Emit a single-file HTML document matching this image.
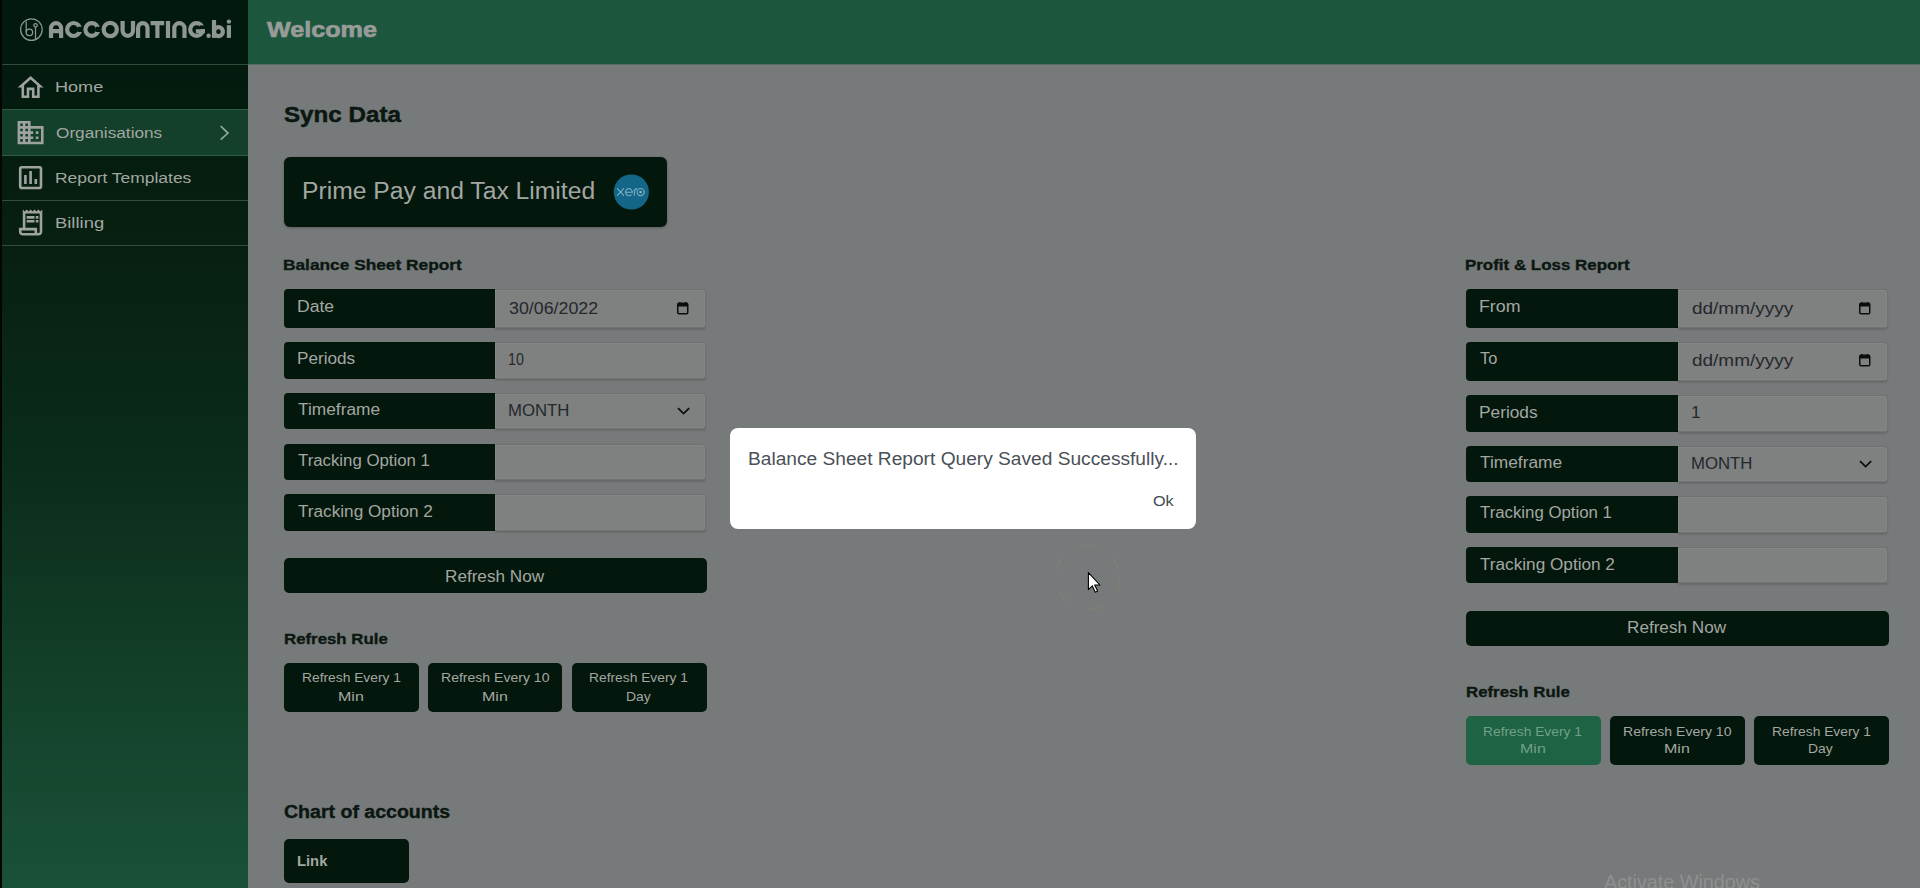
<!DOCTYPE html>
<html><head><meta charset="utf-8">
<style>
*{box-sizing:border-box;margin:0;padding:0}
html,body{width:1920px;height:888px;overflow:hidden}
body{position:relative;background:#777a7a;font-family:"Liberation Sans",sans-serif;}
.a{position:absolute}
.t{position:absolute;white-space:nowrap}
</style></head><body>
<div class="a" style="left:0px;top:0px;width:248px;height:888px;background:linear-gradient(#021a0e 0px,#041d0f 150px,#072012 250px,#0b2c1b 465px,#134029 680px,#1a5139 888px)"></div>
<div class="a" style="left:0px;top:0px;width:2px;height:888px;background:#030504"></div>
<div class="a" style="left:2px;top:0px;width:246px;height:64px;background:#021a0e"></div>
<div class="a" style="left:248px;top:0px;width:1672px;height:64px;background:#1b563d"></div>
<div class="a" style="left:248px;top:64px;width:1672px;height:1px;background:#546f62"></div>
<div class="a" style="left:2px;top:109px;width:246px;height:46px;background:#143f2b"></div>
<div class="a" style="left:2px;top:64px;width:246px;height:1px;background:#2f4f3d"></div>
<div class="a" style="left:2px;top:200px;width:246px;height:1px;background:#2f4f3d"></div>
<div class="a" style="left:2px;top:245px;width:246px;height:1px;background:#2f4f3d"></div>
<div class="a" style="left:2px;top:109px;width:246px;height:1px;background:#2b5c44"></div>
<div class="a" style="left:2px;top:155px;width:246px;height:1px;background:#2b5c44"></div>
<svg class="a" style="left:18px;top:16px" width="28" height="28" viewBox="0 0 28 28" fill="none" stroke="#8e9792" stroke-width="1.25">
<circle cx="13.4" cy="13.55" r="10.8"/>
<path d="M8.2 5.6 V16.3"/><circle cx="11.4" cy="16.3" r="3.25"/>
<circle cx="17.5" cy="9.3" r="1.75"/><path d="M17.5 11.05 V23.6"/>
</svg>
<svg class="a" style="left:0;top:0" width="248" height="64" viewBox="0 0 248 64"><g fill="none" stroke="#8e9792" stroke-width="4.2"><path d="M51 37.9 V28.25 A5.05 5.05 0 0 1 61.1 28.25 V37.9 M51 31.2 H61.1"/><circle cx="73.6" cy="29.5" r="6.5"/><circle cx="91.75" cy="29.5" r="6.35"/><circle cx="110.25" cy="29.5" r="6.6"/><path d="M122.6 21.1 V30.6 A5.2 5.2 0 0 0 133 30.6 V21.1"/><path d="M138.1 37.9 V27.9 A4.7 4.7 0 0 1 147.5 27.9 V37.9"/><path d="M150.6 23.2 H164.2 M157.4 21.1 V37.9 M168 21.1 V37.9"/><path d="M174.3 37.9 V28.3 A5.1 5.1 0 0 1 184.5 28.3 V37.9"/><circle cx="196.55" cy="29.5" r="6.35"/><path d="M214 20 V37.9"/><circle cx="218.45" cy="31.65" r="4.45"/><path d="M228.9 25.2 V37.9"/></g><g fill="#021a0e"><rect x="77.6" y="26.8" width="4.9" height="5.2"/><rect x="95.8" y="26.8" width="4.7" height="5.2"/><rect x="199.5" y="25.4" width="7" height="3.8"/></g><g fill="#8e9792"><rect x="195.9" y="29.2" width="9" height="4"/><circle cx="208.6" cy="35.8" r="2.2"/><circle cx="228.9" cy="21.6" r="2.2"/></g></svg>
<div class="t" style="left:267.30px;top:15.70px;font-size:22.5px;line-height:27px;font-weight:bold;color:#989b98;transform:scaleX(1.1179);transform-origin:0 0;-webkit-text-stroke:0.7px #989b98;">Welcome</div>
<div class="t" style="left:54.73px;top:76.73px;font-size:15.5px;line-height:19px;font-weight:normal;color:#a3a7a1;transform:scaleX(1.1655);transform-origin:0 0;">Home</div>
<div class="t" style="left:55.90px;top:123.43px;font-size:15.5px;line-height:19px;font-weight:normal;color:#a3a7a1;transform:scaleX(1.1107);transform-origin:0 0;">Organisations</div>
<div class="t" style="left:54.78px;top:167.73px;font-size:15.5px;line-height:19px;font-weight:normal;color:#a3a7a1;transform:scaleX(1.1249);transform-origin:0 0;">Report Templates</div>
<div class="t" style="left:54.71px;top:212.93px;font-size:15.5px;line-height:19px;font-weight:normal;color:#a3a7a1;transform:scaleX(1.1879);transform-origin:0 0;">Billing</div>
<svg class="a" style="left:15.4px;top:72.1px" width="31.2" height="31.2" viewBox="0 0 24 24"><path fill="#9ea39f" d="M12 5.69l5 4.5V18h-2v-6H9v6H7v-7.81l5-4.5M12 3L2 12h3v8h6v-6h2v6h6v-8h3L12 3z"/></svg>
<svg class="a" style="left:14.9px;top:117px" width="31.2" height="31.2" viewBox="0 0 24 24"><path fill="#9ea39f" d="M12 7V3H2v18h20V7H12zM6 19H4v-2h2v2zm0-4H4v-2h2v2zm0-4H4V9h2v2zm0-4H4V5h2v2zm4 12H8v-2h2v2zm0-4H8v-2h2v2zm0-4H8V9h2v2zm0-4H8V5h2v2zm10 12h-8v-2h2v-2h-2v-2h2v-2h-2V9h8v10zm-2-8h-2v2h2v-2zm0 4h-2v2h2v-2z"/></svg>
<svg class="a" style="left:15.0px;top:162.0px" width="31.2" height="31.2" viewBox="0 0 24 24"><path fill="#9ea39f" d="M9 17H7v-7h2v7zm4 0h-2V7h2v10zm4 0h-2v-4h2v4zm2 2H5V5h14v14zm0-16H5c-1.1 0-2 .9-2 2v14c0 1.1.9 2 2 2h14c1.1 0 2-.9 2-2V5c0-1.1-.9-2-2-2z"/></svg>
<svg class="a" style="left:15.0px;top:206.9px" width="31.2" height="31.2" viewBox="0 0 24 24"><path fill="#9ea39f" d="M19.5 3.5L18 2l-1.5 1.5L15 2l-1.5 1.5L12 2l-1.5 1.5L9 2 7.5 3.5 6 2v14H3v3c0 1.66 1.34 3 3 3h12c1.66 0 3-1.34 3-3V2l-1.5 1.5zM15 20H6c-.55 0-1-.45-1-1v-1h10v2zm4-1c0 .55-.45 1-1 1s-1-.45-1-1v-3H8V5h11v14zM9 7h6v2H9zM16 7h2v2h-2zM9 10h6v2H9zM16 10h2v2h-2z"/></svg>
<svg class="a" style="left:216px;top:122px" width="16" height="22" viewBox="0 0 16 22"><path d="M4.7 4.2 L12 11.1 L4.7 17.6" fill="none" stroke="#8fb09c" stroke-width="1.6"/></svg>
<div class="t" style="left:284.20px;top:100.60px;font-size:22.5px;line-height:27px;font-weight:bold;color:#0b1711;transform:scaleX(1.0743);transform-origin:0 0;-webkit-text-stroke:0.5px #0b1711;">Sync Data</div>
<div class="a" style="left:284px;top:157px;width:383px;height:70px;background:#03170d;border-radius:6px;box-shadow:0 1px 3px rgba(0,0,0,.25)"></div>
<div class="t" style="left:301.83px;top:177.23px;font-size:23px;line-height:28px;font-weight:normal;color:#a3a7a1;transform:scaleX(1.0733);transform-origin:0 0;">Prime Pay and Tax Limited</div>
<svg class="a" style="left:613px;top:174px" width="36" height="36" viewBox="0 0 36 36"><circle cx="18.3" cy="18" r="17.6" fill="#146689"/><g fill="none" stroke="#7fb0c2" stroke-width="1.1"><path d="M4.2 14.3 L10.8 21.7 M10.8 14.3 L4.2 21.7"/><path d="M12.6 18.2 H19.3 A3.4 3.6 0 1 0 18.4 20.6"/><path d="M21.3 21.8 V17.6 A3.2 3.2 0 0 1 24 14.6"/><circle cx="27.6" cy="18.1" r="3.6"/><circle cx="27.6" cy="18.1" r="0.9" fill="#7fb0c2"/></g></svg>
<div class="t" style="left:283.45px;top:255.80px;font-size:15px;line-height:18px;font-weight:bold;color:#0b1711;transform:scaleX(1.1529);transform-origin:0 0;-webkit-text-stroke:0.35px #0b1711;">Balance Sheet Report</div>
<div class="a" style="left:284px;top:289px;width:211px;height:39px;background:#03170d;border-radius:4px 0 0 4px"></div>
<div class="a" style="left:495px;top:289px;width:211px;height:39px;background:#7f8080;border:1px solid #707172;border-left:0;border-radius:0 3px 3px 0;box-shadow:inset 1px 1px 0 #868687,inset -1px -1px 0 #858586,0 1.5px 1.5px rgba(0,0,0,.12)"></div>
<div class="t" style="left:296.70px;top:296.65px;font-size:16px;line-height:19px;font-weight:normal;color:#a3a7a1;transform:scaleX(1.0973);transform-origin:0 0;">Date</div>
<div class="t" style="left:509.30px;top:298.55px;font-size:16px;line-height:19px;font-weight:normal;color:#23282c;transform:scaleX(1.1125);transform-origin:0 0;">30/06/2022</div>
<svg class="a" style="left:676.5px;top:300.5px" width="14" height="16" viewBox="0 0 14 16"><path d="M2.8 1 V3 M8.8 1 V3" stroke="#0c0d0e" stroke-width="1.4"/><rect x="0.75" y="2.3" width="10" height="10.5" rx="1.3" fill="none" stroke="#0c0d0e" stroke-width="1.5"/><rect x="0.75" y="2.3" width="10" height="3.2" fill="#0c0d0e"/></svg>
<div class="a" style="left:284px;top:341.5px;width:211px;height:37.5px;background:#03170d;border-radius:4px 0 0 4px"></div>
<div class="a" style="left:495px;top:341.5px;width:211px;height:37.5px;background:#7f8080;border:1px solid #707172;border-left:0;border-radius:0 3px 3px 0;box-shadow:inset 1px 1px 0 #868687,inset -1px -1px 0 #858586,0 1.5px 1.5px rgba(0,0,0,.12)"></div>
<div class="t" style="left:296.73px;top:349.15px;font-size:16px;line-height:19px;font-weight:normal;color:#a3a7a1;transform:scaleX(1.0723);transform-origin:0 0;">Periods</div>
<div class="t" style="left:508.41px;top:349.95px;font-size:16px;line-height:19px;font-weight:normal;color:#23282c;transform:scaleX(0.8877);transform-origin:0 0;">10</div>
<div class="a" style="left:284px;top:392.5px;width:211px;height:36.5px;background:#03170d;border-radius:4px 0 0 4px"></div>
<div class="a" style="left:495px;top:392.5px;width:211px;height:36.5px;background:#7f8080;border:1px solid #707172;border-left:0;border-radius:0 3px 3px 0;box-shadow:inset 1px 1px 0 #868687,inset -1px -1px 0 #858586,0 1.5px 1.5px rgba(0,0,0,.12)"></div>
<div class="t" style="left:297.80px;top:400.15px;font-size:16px;line-height:19px;font-weight:normal;color:#a3a7a1;transform:scaleX(1.0821);transform-origin:0 0;">Timeframe</div>
<div class="t" style="left:508.25px;top:400.95px;font-size:16px;line-height:19px;font-weight:normal;color:#23282c;transform:scaleX(1.0473);transform-origin:0 0;">MONTH</div>
<svg class="a" style="left:676px;top:405.5px" width="14" height="10" viewBox="0 0 14 10"><path d="M2 2.2 L7.6 7.6 L13.2 2.2" fill="none" stroke="#0c0d0e" stroke-width="1.8"/></svg>
<div class="a" style="left:284px;top:443.5px;width:211px;height:36.5px;background:#03170d;border-radius:4px 0 0 4px"></div>
<div class="a" style="left:495px;top:443.5px;width:211px;height:36.5px;background:#7f8080;border:1px solid #707172;border-left:0;border-radius:0 3px 3px 0;box-shadow:inset 1px 1px 0 #868687,inset -1px -1px 0 #858586,0 1.5px 1.5px rgba(0,0,0,.12)"></div>
<div class="t" style="left:297.80px;top:451.15px;font-size:16px;line-height:19px;font-weight:normal;color:#a3a7a1;transform:scaleX(1.0494);transform-origin:0 0;">Tracking Option 1</div>
<div class="a" style="left:284px;top:494px;width:211px;height:36.5px;background:#03170d;border-radius:4px 0 0 4px"></div>
<div class="a" style="left:495px;top:494px;width:211px;height:36.5px;background:#7f8080;border:1px solid #707172;border-left:0;border-radius:0 3px 3px 0;box-shadow:inset 1px 1px 0 #868687,inset -1px -1px 0 #858586,0 1.5px 1.5px rgba(0,0,0,.12)"></div>
<div class="t" style="left:297.80px;top:501.65px;font-size:16px;line-height:19px;font-weight:normal;color:#a3a7a1;transform:scaleX(1.0732);transform-origin:0 0;">Tracking Option 2</div>
<div class="a" style="left:284px;top:557.5px;width:422.5px;height:35.0px;background:#03170d;border-radius:5px"></div>
<div class="t" style="left:445.31px;top:565.68px;font-size:16.5px;line-height:20px;font-weight:normal;color:#a3a7a1;transform:scaleX(1.0386);transform-origin:0 0;">Refresh Now</div>
<div class="t" style="left:283.51px;top:628.83px;font-size:15.5px;line-height:19px;font-weight:bold;color:#0b1711;transform:scaleX(1.0854);transform-origin:0 0;-webkit-text-stroke:0.35px #0b1711;">Refresh Rule</div>
<div class="a" style="left:284px;top:663px;width:135px;height:49px;background:#03170d;border-radius:5px"></div>
<div class="a" style="left:428px;top:663px;width:134px;height:49px;background:#03170d;border-radius:5px"></div>
<div class="a" style="left:571.5px;top:663px;width:135.0px;height:49px;background:#03170d;border-radius:5px"></div>
<div class="t" style="left:301.88px;top:670.12px;font-size:13.5px;line-height:16px;font-weight:normal;color:#a3a7a1;transform:scaleX(1.0223);transform-origin:0 0;">Refresh Every 1</div>
<div class="t" style="left:338.41px;top:688.82px;font-size:13.5px;line-height:16px;font-weight:normal;color:#a3a7a1;transform:scaleX(1.1855);transform-origin:0 0;">Min</div>
<div class="t" style="left:440.51px;top:670.12px;font-size:13.5px;line-height:16px;font-weight:normal;color:#a3a7a1;transform:scaleX(1.0400);transform-origin:0 0;">Refresh Every 10</div>
<div class="t" style="left:481.81px;top:688.82px;font-size:13.5px;line-height:16px;font-weight:normal;color:#a3a7a1;transform:scaleX(1.1855);transform-origin:0 0;">Min</div>
<div class="t" style="left:589.28px;top:670.12px;font-size:13.5px;line-height:16px;font-weight:normal;color:#a3a7a1;transform:scaleX(1.0223);transform-origin:0 0;">Refresh Every 1</div>
<div class="t" style="left:625.99px;top:688.82px;font-size:13.5px;line-height:16px;font-weight:normal;color:#a3a7a1;transform:scaleX(1.0300);transform-origin:0 0;">Day</div>
<div class="t" style="left:284.40px;top:801.46px;font-size:18px;line-height:22px;font-weight:bold;color:#0b1711;transform:scaleX(1.0856);transform-origin:0 0;-webkit-text-stroke:0.4px #0b1711;">Chart of accounts</div>
<div class="a" style="left:284px;top:839px;width:125px;height:43.5px;background:#03170d;border-radius:5px"></div>
<div class="t" style="left:296.72px;top:851.80px;font-size:15px;line-height:18px;font-weight:bold;color:#a3a7a1;transform:scaleX(0.9838);transform-origin:0 0;">Link</div>
<div class="t" style="left:1465.47px;top:256.00px;font-size:15px;line-height:18px;font-weight:bold;color:#0b1711;transform:scaleX(1.1281);transform-origin:0 0;-webkit-text-stroke:0.35px #0b1711;">Profit &amp; Loss Report</div>
<div class="a" style="left:1466px;top:289.4px;width:212px;height:38.30000000000001px;background:#03170d;border-radius:4px 0 0 4px"></div>
<div class="a" style="left:1678px;top:289.4px;width:210px;height:38.30000000000001px;background:#7f8080;border:1px solid #707172;border-left:0;border-radius:0 3px 3px 0;box-shadow:inset 1px 1px 0 #868687,inset -1px -1px 0 #858586,0 1.5px 1.5px rgba(0,0,0,.12)"></div>
<div class="t" style="left:1478.69px;top:297.05px;font-size:16px;line-height:19px;font-weight:normal;color:#a3a7a1;transform:scaleX(1.1111);transform-origin:0 0;">From</div>
<div class="t" style="left:1692.30px;top:298.95px;font-size:16px;line-height:19px;font-weight:normal;color:#23282c;transform:scaleX(1.1858);transform-origin:0 0;">dd/mm/yyyy</div>
<svg class="a" style="left:1858.5px;top:300.9px" width="14" height="16" viewBox="0 0 14 16"><path d="M2.8 1 V3 M8.8 1 V3" stroke="#0c0d0e" stroke-width="1.4"/><rect x="0.75" y="2.3" width="10" height="10.5" rx="1.3" fill="none" stroke="#0c0d0e" stroke-width="1.5"/><rect x="0.75" y="2.3" width="10" height="3.2" fill="#0c0d0e"/></svg>
<div class="a" style="left:1466px;top:341.5px;width:212px;height:39.5px;background:#03170d;border-radius:4px 0 0 4px"></div>
<div class="a" style="left:1678px;top:341.5px;width:210px;height:39.5px;background:#7f8080;border:1px solid #707172;border-left:0;border-radius:0 3px 3px 0;box-shadow:inset 1px 1px 0 #868687,inset -1px -1px 0 #858586,0 1.5px 1.5px rgba(0,0,0,.12)"></div>
<div class="t" style="left:1479.80px;top:349.15px;font-size:16px;line-height:19px;font-weight:normal;color:#a3a7a1;transform:scaleX(1.0235);transform-origin:0 0;">To</div>
<div class="t" style="left:1692.30px;top:351.05px;font-size:16px;line-height:19px;font-weight:normal;color:#23282c;transform:scaleX(1.1858);transform-origin:0 0;">dd/mm/yyyy</div>
<svg class="a" style="left:1858.5px;top:353.0px" width="14" height="16" viewBox="0 0 14 16"><path d="M2.8 1 V3 M8.8 1 V3" stroke="#0c0d0e" stroke-width="1.4"/><rect x="0.75" y="2.3" width="10" height="10.5" rx="1.3" fill="none" stroke="#0c0d0e" stroke-width="1.5"/><rect x="0.75" y="2.3" width="10" height="3.2" fill="#0c0d0e"/></svg>
<div class="a" style="left:1466px;top:395px;width:212px;height:37px;background:#03170d;border-radius:4px 0 0 4px"></div>
<div class="a" style="left:1678px;top:395px;width:210px;height:37px;background:#7f8080;border:1px solid #707172;border-left:0;border-radius:0 3px 3px 0;box-shadow:inset 1px 1px 0 #868687,inset -1px -1px 0 #858586,0 1.5px 1.5px rgba(0,0,0,.12)"></div>
<div class="t" style="left:1478.72px;top:402.65px;font-size:16px;line-height:19px;font-weight:normal;color:#a3a7a1;transform:scaleX(1.0798);transform-origin:0 0;">Periods</div>
<div class="t" style="left:1691.22px;top:403.45px;font-size:16px;line-height:19px;font-weight:normal;color:#23282c;transform:scaleX(1.0800);transform-origin:0 0;">1</div>
<div class="a" style="left:1466px;top:445.6px;width:212px;height:36.39999999999998px;background:#03170d;border-radius:4px 0 0 4px"></div>
<div class="a" style="left:1678px;top:445.6px;width:210px;height:36.39999999999998px;background:#7f8080;border:1px solid #707172;border-left:0;border-radius:0 3px 3px 0;box-shadow:inset 1px 1px 0 #868687,inset -1px -1px 0 #858586,0 1.5px 1.5px rgba(0,0,0,.12)"></div>
<div class="t" style="left:1479.80px;top:453.25px;font-size:16px;line-height:19px;font-weight:normal;color:#a3a7a1;transform:scaleX(1.0821);transform-origin:0 0;">Timeframe</div>
<div class="t" style="left:1691.25px;top:454.05px;font-size:16px;line-height:19px;font-weight:normal;color:#23282c;transform:scaleX(1.0473);transform-origin:0 0;">MONTH</div>
<svg class="a" style="left:1858px;top:458.6px" width="14" height="10" viewBox="0 0 14 10"><path d="M2 2.2 L7.6 7.6 L13.2 2.2" fill="none" stroke="#0c0d0e" stroke-width="1.8"/></svg>
<div class="a" style="left:1466px;top:495.7px;width:212px;height:37.30000000000001px;background:#03170d;border-radius:4px 0 0 4px"></div>
<div class="a" style="left:1678px;top:495.7px;width:210px;height:37.30000000000001px;background:#7f8080;border:1px solid #707172;border-left:0;border-radius:0 3px 3px 0;box-shadow:inset 1px 1px 0 #868687,inset -1px -1px 0 #858586,0 1.5px 1.5px rgba(0,0,0,.12)"></div>
<div class="t" style="left:1479.80px;top:503.35px;font-size:16px;line-height:19px;font-weight:normal;color:#a3a7a1;transform:scaleX(1.0494);transform-origin:0 0;">Tracking Option 1</div>
<div class="a" style="left:1466px;top:547.2px;width:212px;height:36.299999999999955px;background:#03170d;border-radius:4px 0 0 4px"></div>
<div class="a" style="left:1678px;top:547.2px;width:210px;height:36.299999999999955px;background:#7f8080;border:1px solid #707172;border-left:0;border-radius:0 3px 3px 0;box-shadow:inset 1px 1px 0 #868687,inset -1px -1px 0 #858586,0 1.5px 1.5px rgba(0,0,0,.12)"></div>
<div class="t" style="left:1479.80px;top:554.85px;font-size:16px;line-height:19px;font-weight:normal;color:#a3a7a1;transform:scaleX(1.0732);transform-origin:0 0;">Tracking Option 2</div>
<div class="a" style="left:1466px;top:611px;width:423px;height:34.5px;background:#03170d;border-radius:5px"></div>
<div class="t" style="left:1627.21px;top:617.48px;font-size:16.5px;line-height:20px;font-weight:normal;color:#a3a7a1;transform:scaleX(1.0386);transform-origin:0 0;">Refresh Now</div>
<div class="t" style="left:1465.61px;top:682.13px;font-size:15.5px;line-height:19px;font-weight:bold;color:#0b1711;transform:scaleX(1.0854);transform-origin:0 0;-webkit-text-stroke:0.35px #0b1711;">Refresh Rule</div>
<div class="a" style="left:1466px;top:716px;width:134.5px;height:48.5px;background:#1d6344;border-radius:5px"></div>
<div class="a" style="left:1610px;top:716px;width:135px;height:48.5px;background:#03170d;border-radius:5px"></div>
<div class="a" style="left:1754px;top:716px;width:135px;height:48.5px;background:#03170d;border-radius:5px"></div>
<div class="t" style="left:1483.48px;top:723.72px;font-size:13.5px;line-height:16px;font-weight:normal;color:#72a086;transform:scaleX(1.0223);transform-origin:0 0;">Refresh Every 1</div>
<div class="t" style="left:1520.01px;top:741.02px;font-size:13.5px;line-height:16px;font-weight:normal;color:#72a086;transform:scaleX(1.1855);transform-origin:0 0;">Min</div>
<div class="t" style="left:1623.01px;top:723.72px;font-size:13.5px;line-height:16px;font-weight:normal;color:#a3a7a1;transform:scaleX(1.0400);transform-origin:0 0;">Refresh Every 10</div>
<div class="t" style="left:1664.31px;top:741.02px;font-size:13.5px;line-height:16px;font-weight:normal;color:#a3a7a1;transform:scaleX(1.1855);transform-origin:0 0;">Min</div>
<div class="t" style="left:1771.78px;top:723.72px;font-size:13.5px;line-height:16px;font-weight:normal;color:#a3a7a1;transform:scaleX(1.0223);transform-origin:0 0;">Refresh Every 1</div>
<div class="t" style="left:1808.49px;top:741.02px;font-size:13.5px;line-height:16px;font-weight:normal;color:#a3a7a1;transform:scaleX(1.0300);transform-origin:0 0;">Day</div>
<div class="a" style="left:730px;top:428px;width:466px;height:101px;background:#fff;border-radius:8px"></div>
<div class="t" style="left:747.91px;top:448.73px;font-size:17.5px;line-height:21px;font-weight:normal;color:#4b5058;transform:scaleX(1.0940);transform-origin:0 0;">Balance Sheet Report Query Saved Successfully...</div>
<div class="t" style="left:1152.60px;top:490.53px;font-size:15.5px;line-height:19px;font-weight:normal;color:#3f4a50;transform:scaleX(1.0421);transform-origin:0 0;">Ok</div>
<div class="t" style="left:1603.50px;top:869.67px;font-size:20px;line-height:24px;font-weight:normal;color:#8e9090;transform:scaleX(0.9884);transform-origin:0 0;">Activate Windows</div>
<svg class="a" style="left:1050px;top:540px" width="80" height="80" viewBox="0 0 80 80"><circle cx="37.6" cy="37.6" r="32" fill="none" stroke="#9a9a60" stroke-width="1.5" stroke-dasharray="14 22" opacity="0.18"/></svg>
<svg class="a" style="left:1087px;top:571px" width="16" height="24" viewBox="0 0 16 24"><path d="M1.4 1.6 V18.6 L5.3 14.9 L8.3 21.2 L10.6 20.1 L7.7 14 L12.9 14 Z" fill="#fff" stroke="#000" stroke-width="1.1" stroke-linejoin="round"/></svg>
</body></html>
